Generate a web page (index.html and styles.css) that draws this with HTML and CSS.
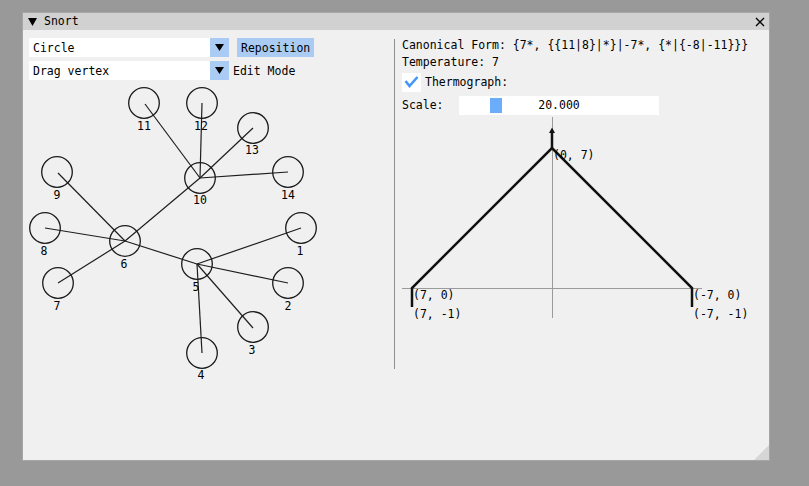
FILE: index.html
```html
<!DOCTYPE html>
<html>
<head>
<meta charset="utf-8">
<link rel="stylesheet" href="styles.css">
</head>
<body>
<div class="window">
  <div class="titlebar">
    <svg class="collapse" width="9" height="8" viewBox="0 0 9 8"><polygon points="0,0 9,0 4.5,8" fill="#000"/></svg>
    <span class="title">Snort</span>
    <svg class="close" width="10" height="10" viewBox="0 0 10 10"><path d="M1 1 L9 9 M9 1 L1 9" stroke="#000" stroke-width="1.4"/></svg>
  </div>
  <div class="content">
    <div class="left">
      <div class="row">
        <div class="combo"><span class="combo-text">Circle</span><span class="combo-arrow"><svg width="9" height="7" viewBox="0 0 9 7"><polygon points="0,0 9,0 4.5,7" fill="#000"/></svg></span></div>
        <div class="button">Reposition</div>
      </div>
      <div class="row">
        <div class="combo"><span class="combo-text">Drag vertex</span><span class="combo-arrow"><svg width="9" height="7" viewBox="0 0 9 7"><polygon points="0,0 9,0 4.5,7" fill="#000"/></svg></span></div>
        <span class="label">Edit Mode</span>
      </div>
      <svg class="graph" width="365" height="306" viewBox="29 84 365 306">
        <g class="edges">
          <line x1="197" y1="264" x2="301" y2="228"/>
          <line x1="197" y1="264" x2="288" y2="283"/>
          <line x1="197" y1="264" x2="253" y2="328"/>
          <line x1="197" y1="264" x2="202" y2="353"/>
          <line x1="197" y1="264" x2="125" y2="241"/>
          <line x1="125" y1="241" x2="58" y2="283"/>
          <line x1="125" y1="241" x2="45" y2="228"/>
          <line x1="125" y1="241" x2="58" y2="173"/>
          <line x1="125" y1="241" x2="200" y2="178"/>
          <line x1="200" y1="178" x2="145" y2="104"/>
          <line x1="200" y1="178" x2="202" y2="103"/>
          <line x1="200" y1="178" x2="253" y2="128"/>
          <line x1="200" y1="178" x2="288" y2="172"/>
        </g>
        <g class="nodes">
          <circle cx="301" cy="228" r="15.3"/>
          <circle cx="288" cy="283" r="15.3"/>
          <circle cx="253" cy="327" r="15.3"/>
          <circle cx="202" cy="353" r="15.3"/>
          <circle cx="197" cy="264" r="15.3"/>
          <circle cx="125" cy="241" r="15.3"/>
          <circle cx="58" cy="283" r="15.3"/>
          <circle cx="45" cy="228" r="15.3"/>
          <circle cx="57" cy="172" r="15.3"/>
          <circle cx="200" cy="178" r="15.3"/>
          <circle cx="144" cy="103" r="15.3"/>
          <circle cx="202" cy="103" r="15.3"/>
          <circle cx="253" cy="128" r="15.3"/>
          <circle cx="288" cy="172" r="15.3"/>
        </g>
        <g class="labels">
          <text x="300" y="255">1</text>
          <text x="288" y="310">2</text>
          <text x="252" y="354">3</text>
          <text x="201" y="379">4</text>
          <text x="196" y="291">5</text>
          <text x="124" y="268">6</text>
          <text x="57" y="310">7</text>
          <text x="44" y="255">8</text>
          <text x="57" y="199">9</text>
          <text x="200" y="204">10</text>
          <text x="144" y="130">11</text>
          <text x="201" y="130">12</text>
          <text x="252" y="154">13</text>
          <text x="288" y="199">14</text>
        </g>
      </svg>
    </div>
    <div class="separator"></div>
    <div class="right">
      <div class="text">Canonical Form: {7*, {{11|8}|*}|-7*, {*|{-8|-11}}}</div>
      <div class="text">Temperature: 7</div>
      <div class="checkrow">
        <span class="checkbox"><svg width="19" height="19" viewBox="0 0 19 19"><polyline points="3.5,8 7.5,13 15.5,4" fill="none" stroke="#4296fa" stroke-width="2.6"/></svg></span>
        <span class="label">Thermograph:</span>
      </div>
      <div class="sliderrow">
        <span class="slider-label">Scale:</span>
        <div class="slider"><span class="grab"></span><span class="slider-value">20.000</span></div>
      </div>
      <svg class="thermo" width="360" height="210" viewBox="402 116 360 210">
        <line class="axis" x1="402" y1="288.5" x2="702" y2="288.5"/>
        <line class="axis" x1="552.5" y1="117" x2="552.5" y2="318"/>
        <polyline class="thermo-line" points="412,307 412,288 552,148 692,288 692,307"/>
        <line class="thermo-line" x1="552" y1="148" x2="552" y2="131"/>
        <polygon points="549,133 555,133 552,127.5" fill="#111"/>
        <text x="553" y="159">(0, 7)</text>
        <text x="413" y="299">(7, 0)</text>
        <text x="413" y="318">(7, -1)</text>
        <text x="693" y="299">(-7, 0)</text>
        <text x="693" y="318">(-7, -1)</text>
      </svg>
    </div>
  </div>
  <svg class="grip" width="15" height="15" viewBox="0 0 15 15"><polygon points="15,0 15,15 0,15" fill="#d6d6d6"/></svg>
</div>
</body>
</html>
```

FILE: styles.css
```css
html, body {
  margin: 0;
  padding: 0;
}
body {
  background: #999999;
  width: 809px;
  height: 486px;
  overflow: hidden;
  padding: 12px 0 0 22px;
  box-sizing: border-box;
  font-family: "DejaVu Sans Mono", "Liberation Mono", monospace;
  font-size: 11.5px;
  color: #000;
}
.window {
  position: relative;
  width: 748px;
  height: 449px;
  box-sizing: border-box;
  border: 1px solid #a6a6a6;
  background: #f0f0f0;
  display: flex;
  flex-direction: column;
}
.titlebar {
  height: 17px;
  background: #d1d1d1;
  display: flex;
  align-items: center;
  padding-left: 5px;
  flex-shrink: 0;
}
.collapse {
  display: block;
  margin-right: 7px;
}
.title {
  line-height: 17px;
  flex: 1;
}
.close {
  display: block;
  margin-right: 4px;
}
.content {
  display: flex;
  flex: 1;
}
.left {
  width: 371px;
  box-sizing: border-box;
  padding: 8px 0 0 6px;
  display: flex;
  flex-direction: column;
  gap: 4px;
}
.row {
  display: flex;
  align-items: center;
  height: 19px;
}
.combo {
  width: 200px;
  height: 19px;
  display: flex;
  background: #ffffff;
}
.combo-text {
  flex: 1;
  padding: 1px 0 0 4px;
  line-height: 19px;
  height: 18px;
}
.combo-arrow {
  width: 19px;
  height: 19px;
  background: #aaccf4;
  display: flex;
  align-items: center;
  justify-content: center;
}
.combo-arrow svg {
  display: block;
}
.button {
  margin-left: 8px;
  height: 18px;
  padding: 1px 4px 0 4px;
  line-height: 19px;
  background: #aaccf4;
}
.label {
  margin-left: 4px;
  line-height: 19px;
  padding-top: 1px;
}
.graph {
  display: block;
}
.edges line {
  stroke: #1e1e1e;
  stroke-width: 1.2;
}
.nodes circle {
  fill: none;
  stroke: #1a1a1a;
  stroke-width: 1.3;
}
.labels text {
  font-family: "DejaVu Sans Mono", "Liberation Mono", monospace;
  font-size: 11.5px;
  text-anchor: middle;
  fill: #000;
}
.separator {
  width: 1px;
  height: 330px;
  margin-top: 9px;
  background: #8f8f8f;
}
.right {
  flex: 1;
  padding: 9px 0 0 7px;
  display: flex;
  flex-direction: column;
}
.text {
  line-height: 13px;
  margin-bottom: 4px;
  white-space: pre;
}
.checkrow {
  display: flex;
  align-items: center;
  height: 19px;
  margin-bottom: 4px;
}
.checkbox {
  width: 19px;
  height: 19px;
  background: #ffffff;
  display: block;
}
.checkbox svg {
  display: block;
}
.checkrow .label {
  padding-top: 0;
}
.sliderrow {
  display: flex;
  align-items: center;
  height: 19px;
}
.slider-label {
  width: 57px;
  line-height: 19px;
}
.slider {
  position: relative;
  width: 200px;
  height: 19px;
  background: #ffffff;
  display: flex;
  align-items: center;
  justify-content: center;
}
.grab {
  position: absolute;
  left: 31px;
  top: 2px;
  width: 12px;
  height: 15px;
  background: #6badfb;
}
.slider-value {
  position: relative;
  line-height: 19px;
}
.thermo {
  display: block;
  margin-top: 1px;
}
.axis {
  stroke: #9a9a9a;
  stroke-width: 1;
}
.thermo-line {
  fill: none;
  stroke: #111111;
  stroke-width: 2.5;
}
.thermo text {
  font-family: "DejaVu Sans Mono", "Liberation Mono", monospace;
  font-size: 11.5px;
  fill: #000;
  white-space: pre;
}
.grip {
  position: absolute;
  right: 0;
  bottom: 0;
  display: block;
}
```
